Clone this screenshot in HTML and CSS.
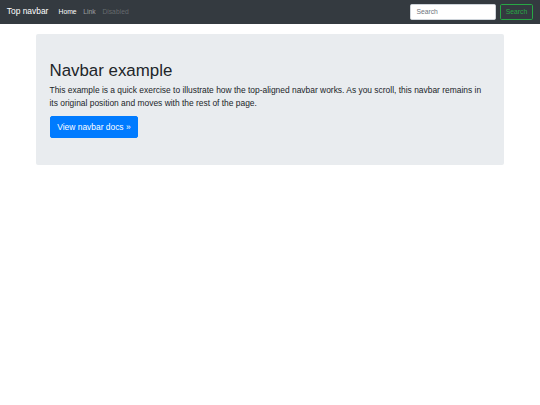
FILE: index.html
```html
<!DOCTYPE html>
<html lang="en">
<head>
<meta charset="utf-8">
<title>Top navbar example</title>
<link rel="stylesheet" href="styles.css">
</head>
<body>
<nav class="navbar">
  <a class="brand" href="#">Top navbar</a>
  <ul class="nav">
    <li><a class="nav-link active" href="#">Home</a></li>
    <li><a class="nav-link" href="#">Link</a></li>
    <li><a class="nav-link disabled" href="#">Disabled</a></li>
  </ul>
  <form class="search-form">
    <input class="search-input" type="text" placeholder="Search" aria-label="Search">
    <button class="search-btn" type="button">Search</button>
  </form>
</nav>
<main class="container">
  <div class="jumbotron">
    <h1 class="title">Navbar example</h1>
    <p class="lead">This example is a quick exercise to illustrate how the top-aligned navbar works. As you scroll, this navbar remains in its original position and moves with the rest of the page.</p>
    <a class="btn-primary" href="#" role="button">View navbar docs &raquo;</a>
  </div>
</main>
</body>
</html>
```

FILE: styles.css
```css
* { box-sizing: border-box; }
html, body { margin: 0; padding: 0; }
body {
  font-family: "Liberation Sans", Arial, sans-serif;
  font-size: 6.75px;
  line-height: 1.5;
  color: #212529;
  background: #fff;
}
.navbar {
  display: flex;
  align-items: center;
  height: 23.6px;
  padding: 0 6.75px;
  background: #343a40;
  margin-bottom: 10.1px;
}
.brand {
  font-size: 8.43px;
  line-height: 12.65px;
  padding: 2.1px 0;
  margin-right: 6.75px;
  color: #fff;
  text-decoration: none;
  white-space: nowrap;
}
.nav {
  display: flex;
  list-style: none;
  margin: 0;
  padding: 0;
  flex: 1;
}
.nav-link {
  display: block;
  padding: 3.37px 3.37px;
  line-height: 10.1px;
  color: rgba(255,255,255,.5);
  text-decoration: none;
}
.nav-link.active { color: #fff; }
.nav-link.disabled { color: rgba(255,255,255,.25); }
.search-form {
  display: flex;
  align-items: center;
  gap: 3.37px;
}
.search-input {
  width: 86px;
  height: 16px;
  padding: 2.5px 5.06px;
  font-family: inherit;
  font-size: 6.75px;
  line-height: 10.1px;
  color: #495057;
  background: #fff;
  border: 0.5px solid #ced4da;
  border-radius: 1.7px;
  outline: none;
}
.search-input::placeholder { color: #6c757d; }
.search-btn {
  height: 16px;
  padding: 2.5px 5.06px;
  font-family: inherit;
  font-size: 6.75px;
  line-height: 10.1px;
  color: #28a745;
  background: transparent;
  border: 0.5px solid #28a745;
  border-radius: 1.7px;
}
.container {
  width: 468px;
  margin: 0 auto;
}
.jumbotron {
  background: #e9ecef;
  border-radius: 2px;
  padding: 27px 13.5px;
}
.title {
  margin: 0 0 3.37px;
  font-size: 16.86px;
  font-weight: 500;
  line-height: 20.2px;
}
.lead {
  margin: 0 0 6.75px;
  font-size: 8.43px;
  font-weight: 300;
  line-height: 12.65px;
}
.btn-primary {
  display: inline-block;
  padding: 3.37px 6.75px;
  font-size: 8.43px;
  line-height: 12.65px;
  color: #fff;
  background: #007bff;
  border: 0.5px solid #007bff;
  border-radius: 2px;
  text-decoration: none;
}
```
